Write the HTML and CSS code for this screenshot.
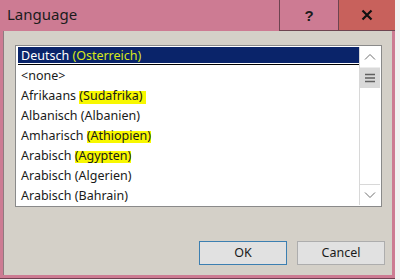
FILE: index.html
```html
<!DOCTYPE html>
<html>
<head>
<meta charset="utf-8">
<link rel="stylesheet" href="styles.css">
</head>
<body>
<div class="window">
  <div class="titlebar">
    <div class="title">Language</div>
    <div class="tbtn help">?</div>
    <div class="tbtn close">
      <svg width="12" height="12" viewBox="0 0 12 12"><path d="M1.5 1.5 L10.5 10.5 M10.5 1.5 L1.5 10.5" stroke="#111" stroke-width="2.2" fill="none"/></svg>
    </div>
  </div>
  <div class="client">
    <div class="listbox">
      <div class="items">
        <div class="row sel">Deutsch <span class="mark-sel">(Osterreich)</span></div>
        <div class="row">&lt;none&gt;</div>
        <div class="row">Afrikaans <span class="mark">(Sudafrika)&nbsp;</span></div>
        <div class="row">Albanisch (Albanien)</div>
        <div class="row">Amharisch <span class="mark">(Athiopien)</span></div>
        <div class="row">Arabisch <span class="mark">(Agypten)</span></div>
        <div class="row">Arabisch (Algerien)</div>
        <div class="row">Arabisch (Bahrain)</div>
      </div>
      <div class="scrollbar">
        <div class="arrow">
          <svg width="12" height="8" viewBox="0 0 12 8"><path d="M1 6.5 L6 1.5 L11 6.5" stroke="#707070" stroke-width="1" fill="none"/></svg>
        </div>
        <div class="thumb">
          <svg width="12" height="10" viewBox="0 0 12 10"><path d="M1 1.5 H11 M1 5 H11 M1 8.5 H11" stroke="#606060" stroke-width="1.4" fill="none"/></svg>
        </div>
        <div class="track"></div>
        <div class="arrow down">
          <svg width="12" height="8" viewBox="0 0 12 8"><path d="M1 1.5 L6 6.5 L11 1.5" stroke="#707070" stroke-width="1" fill="none"/></svg>
        </div>
      </div>
    </div>
    <div class="buttons">
      <div class="btn default">OK</div>
      <div class="btn">Cancel</div>
    </div>
  </div>
</div>
</body>
</html>
```
FILE: styles.css
```css
html, body {
  margin: 0;
  padding: 0;
  background: #f2f2f2;
}
body {
  font-family: "Noto Sans", "DejaVu Sans", sans-serif;
}
.window {
  width: 395px;
  height: 279px;
  box-sizing: border-box;
  background: #cd7b93;
  display: flex;
  flex-direction: column;
  border-bottom: 1px solid #6d4050;
}
.titlebar {
  height: 31px;
  display: flex;
  align-items: stretch;
  flex: none;
}
.title {
  flex: 1;
  padding-left: 7px;
  font-size: 15px;
  line-height: 29px;
  color: #1c1c1c;
}
.tbtn {
  display: flex;
  align-items: center;
  justify-content: center;
  box-sizing: border-box;
}
.help {
  width: 60px;
  border-left: 1px solid #6d4450;
  border-right: 1px solid #6d4450;
  border-bottom: 1px solid #6d4450;
  font-family: "Liberation Sans", sans-serif;
  font-weight: bold;
  font-size: 15px;
  color: #1c1c1c;
}
.close {
  width: 56px;
  background: #c8615c;
  border-bottom: 1px solid #6d4450;
}
.client {
  flex: 1;
  margin: 0 3px 3px 3px;
  background: #d4d0c8;
  border-left: 1px solid #8f7a80;
  display: flex;
  flex-direction: column;
  padding: 14px 7px 0 11px;
}
.listbox {
  height: 162px;
  margin-right: 3px;
  box-sizing: border-box;
  border: 1px solid #8a8a8a;
  background: #fff;
  display: flex;
  padding: 1px;
}
.items {
  flex: 1;
  padding-left: 1px;
}
.row {
  height: 20px;
  box-sizing: border-box;
  padding-left: 3px;
  font-size: 12.5px;
  line-height: 17px;
  color: #1a1a1a;
  white-space: nowrap;
}
.row.sel {
  color: #fff;
  background: linear-gradient(to bottom, #0a246a 0 16px, #ffffff 16px 17px, #000 17px 18px, transparent 18px);
}
.mark {
  background: linear-gradient(to bottom, transparent 4px, #f8f800 4px 16.5px, transparent 16.5px);
}
.mark-sel {
  color: #d6e81a;
}
.scrollbar {
  width: 21px;
  box-sizing: border-box;
  border-left: 1px solid #d8d8d8;
  display: flex;
  flex-direction: column;
  background: #fff;
}
.arrow {
  height: 20px;
  display: flex;
  align-items: center;
  justify-content: center;
}
.thumb {
  height: 20px;
  background: #d9d9d9;
  border-top: 1px solid #ececec;
  display: flex;
  align-items: center;
  justify-content: center;
}
.track {
  flex: 1;
  background: #fff;
}
.arrow.down {
  border-top: 1px solid #d8d8d8;
}
.buttons {
  display: flex;
  justify-content: flex-end;
  gap: 10px;
  margin-top: 34px;
}
.btn {
  width: 88px;
  height: 24px;
  box-sizing: border-box;
  border: 1px solid #adadad;
  background: #e1e1e1;
  font-size: 12.5px;
  line-height: 22px;
  text-align: center;
  color: #1a1a1a;
}
.btn.default {
  border-color: #3c7fb1;
}
```
